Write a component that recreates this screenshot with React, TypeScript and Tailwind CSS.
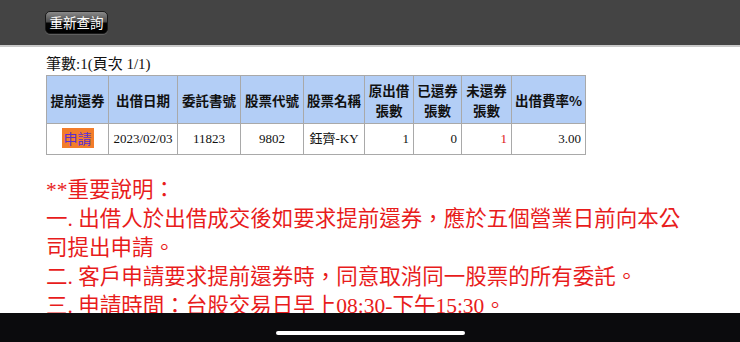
import React from "react";

const serif = "font-['Liberation_Serif','Noto_Sans_CJK_TC',serif]";
const sans = "font-['Noto_Sans_CJK_TC','Noto_Sans',sans-serif]";

type Col = { head: React.ReactNode; w: string };

const cols: Col[] = [
  { head: "提前還券", w: "w-[62px]" },
  { head: "出借日期", w: "w-[69px]" },
  { head: "委託書號", w: "w-[63px]" },
  { head: "股票代號", w: "w-[63px]" },
  { head: "股票名稱", w: "w-[61px]" },
  { head: <>原出借<br />張數</>, w: "w-[49px]" },
  { head: <>已還券<br />張數</>, w: "w-[48px]" },
  { head: <>未還券<br />張數</>, w: "w-[50px]" },
  { head: "出借費率%", w: "w-[74px]" },
];

export default function App() {
  const td = "border border-[#a9a9a9] px-[4px] text-[13px] text-[#111] whitespace-nowrap";
  return (
    <div className="relative w-[740px] h-[342px] overflow-hidden bg-white">
      <div className="h-[47px] bg-[#444] border-b-2 border-[#c9c9c9] flex items-center pl-[45px]">
        <button
          className={`${sans} h-[23px] w-[63px] rounded-[5px] border border-[#1a1a1a] text-white text-[13.5px] leading-none bg-[linear-gradient(to_bottom,#8a8a8a_0%,#4a4a4a_48%,#050505_52%,#000_100%)] shadow-[0_1px_0_rgba(255,255,255,0.15)]`}
        >
          重新查詢
        </button>
      </div>

      <div className="px-[46px] pt-[7px]">
        <div className={`${serif} text-[15px] leading-[20px] text-[#111]`}>筆數:1(頁次 1/1)</div>

        <table className="mt-[1px] border-collapse table-fixed w-[539px]">
          <thead>
            <tr className="h-[48px] bg-[#b3cef6]">
              {cols.map((c, i) => (
                <th
                  key={i}
                  className={`${c.w} ${sans} border border-[#a9a9a9] text-[13.5px] leading-[20px] font-bold text-[#111] text-center px-0`}
                >
                  {c.head}
                </th>
              ))}
            </tr>
          </thead>
          <tbody>
            <tr className={`h-[31px] ${serif}`}>
              <td className={`${td} text-center`}>
                <span className={`${sans} inline-block bg-[#f37d2b] text-[#5a2fd0] text-[14px] leading-[20px] px-[2px]`}>申請</span>
              </td>
              <td className={`${td} text-center`}>2023/02/03</td>
              <td className={`${td} text-center`}>11823</td>
              <td className={`${td} text-center`}>9802</td>
              <td className={`${td} text-center`}>鈺齊-KY</td>
              <td className={`${td} text-right`}>1</td>
              <td className={`${td} text-right`}>0</td>
              <td className={`${td} text-right text-[#e02020]`}>1</td>
              <td className={`${td} text-right`}>3.00</td>
            </tr>
          </tbody>
        </table>

        <div className={`${serif} mt-[21px] w-[648px] text-[21.5px] leading-[29px] text-[#e81c1c]`}>
          <p>**重要說明：</p>
          <p>一. 出借人於出借成交後如要求提前還券，應於五個營業日前向本公司提出申請。</p>
          <p>二. 客戶申請要求提前還券時，同意取消同一股票的所有委託。</p>
          <p>三. 申請時間：台股交易日早上08:30-下午15:30。</p>
        </div>
      </div>

      <div className="absolute left-0 bottom-0 w-full h-[29px] bg-[#0b0b0d] flex justify-center items-end pb-[7px]">
        <div className="w-[189px] h-[4px] rounded-full bg-white" />
      </div>
    </div>
  );
}
